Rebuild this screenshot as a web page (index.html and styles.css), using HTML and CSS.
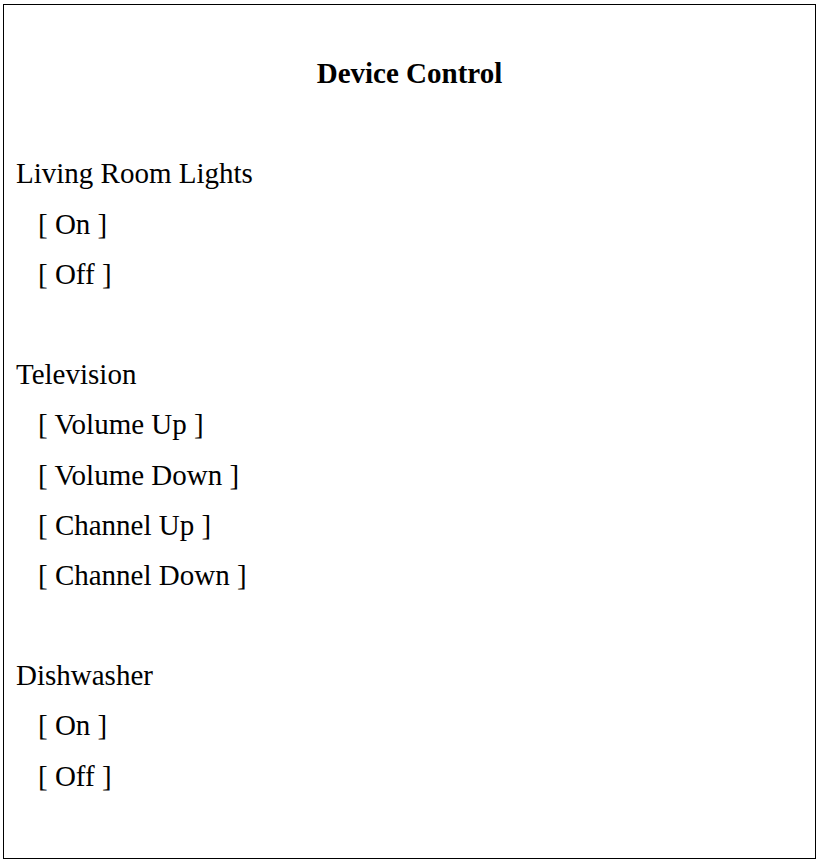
FILE: index.html
```html
<!DOCTYPE html>
<html>
<head>
<meta charset="utf-8">
<title>Device Control</title>
<link rel="stylesheet" href="styles.css">
</head>
<body>
<div class="panel">
  <h1 class="title">Device Control</h1>
  <section class="group">
    <div class="device">Living Room Lights</div>
    <div class="action">[ On ]</div>
    <div class="action">[ Off ]</div>
  </section>
  <section class="group">
    <div class="device">Television</div>
    <div class="action">[ Volume Up ]</div>
    <div class="action">[ Volume Down ]</div>
    <div class="action">[ Channel Up ]</div>
    <div class="action">[ Channel Down ]</div>
  </section>
  <section class="group">
    <div class="device">Dishwasher</div>
    <div class="action">[ On ]</div>
    <div class="action">[ Off ]</div>
  </section>
</div>
</body>
</html>
```
FILE: styles.css
```css
html, body {
  margin: 0;
  padding: 0;
  background: #fff;
}
body {
  font-family: "Liberation Serif", "Times New Roman", serif;
  font-size: 29px;
  line-height: 50.2px;
  color: #000;
}
.panel {
  margin: 4px 3px 0 3px;
  border: 1px solid #000;
  box-sizing: border-box;
  height: 855px;
  padding: 43px 12px 0 12px;
}
.title {
  margin: 0;
  font-size: 29px;
  font-weight: bold;
  text-align: center;
  line-height: 50.2px;
}
.group {
  margin-top: 50.2px;
}
.device {
  height: 50.2px;
}
.action {
  padding-left: 22px;
  height: 50.2px;
}
```
